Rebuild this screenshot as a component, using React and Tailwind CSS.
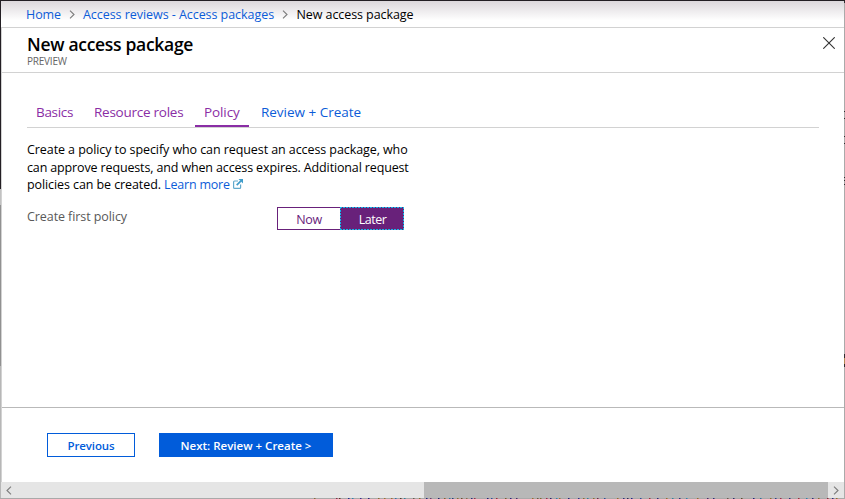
import React from "react";

const marks = [
  [314, "#8a6a3c"], [336, "#8b2a4a"], [339, "#5b2f20"], [348, "#1f2a8c"], [352, "#2d7fae"], [360, "#3a2b8c"],
  [368, "#2a1f7a"], [378, "#8a6a2c"], [384, "#a07030"], [391, "#9a6a30"], [395, "#2d6fae"], [400, "#4a3a2c"],
  [404, "#2d7f9e"], [413, "#6a5a4c"], [419, "#8a6a2c"], [426, "#20207a"], [430, "#6a3a6c"], [438, "#1f1f6a"],
  [444, "#8a5a2c"], [449, "#2d6f9e"], [452, "#1f3a7a"], [457, "#8a6a2c"], [461, "#6a4a2c"], [466, "#8a6a4c"],
  [471, "#2a2a7a"], [474, "#9a2a4a"], [487, "#1f1f7a"], [491, "#2a4a9a"], [496, "#9a2a3a"], [505, "#7a5a2c"],
  [510, "#2a1f7a"], [516, "#4a2a6c"], [532, "#9a6a2c"], [537, "#6a5a3c"], [540, "#7a6a2c"], [546, "#9a2a4a"],
  [550, "#2a1f6a"], [556, "#2d7fae"], [559, "#9a6a2c"], [568, "#1f1f7a"], [578, "#2a2a8a"], [583, "#8a6a2c"],
  [587, "#2d7f9e"], [593, "#8a6a2c"], [597, "#6a2a4c"], [604, "#2a4a9a"], [617, "#9a6a2c"], [623, "#2a2a7a"],
  [627, "#2a2a5a"], [631, "#1f1f8a"], [640, "#2a4a9a"], [649, "#9a2a3a"], [657, "#2a2a7a"], [666, "#9a6a2c"],
  [672, "#2d7f9e"], [679, "#2a2a7a"], [686, "#2d7fae"], [697, "#9a6a2c"], [707, "#4a2a6c"], [713, "#2a2a7a"],
  [727, "#6a5a4c"], [733, "#2a2a6a"], [741, "#5a4a2c"], [753, "#1f1f7a"], [760, "#2d6f9e"], [770, "#8a6a2c"],
  [775, "#2a3a8a"], [780, "#9a2a4a"], [789, "#2a2a7a"], [798, "#9a2a3a"], [806, "#2d7fae"], [812, "#2a2a7a"],
  [818, "#8a6a2c"], [827, "#8a2a3a"], [832, "#2a2a7a"], [836, "#9a6a2c"],
];

function Chevron({ left = false }) {
  return (
    <svg width="6" height="9" viewBox="0 0 6 9" fill="none" stroke="#7b7b7b" strokeWidth="1.1" className="shrink-0">
      <path d={left ? "M5 .7 1 4.5 5 8.3" : "M1 .7 5 4.5 1 8.3"} />
    </svg>
  );
}

function External() {
  return (
    <svg width="10" height="10" viewBox="0 0 10 10" fill="none" stroke="#3f9cca" className="ml-[3px] inline-block align-[0.5px]">
      <path d="M5 2H1.5Q.6 2 .6 2.9v5.6q0 .9.9.9h5.2q.9 0 .9-.9V5.5" stroke="#62a9cc" strokeWidth="1.2" />
      <path d="M3.7 6.2 8 1.9" strokeWidth="1.7" />
      <path d="M5.5 0H10v4.5z" fill="#3f9cca" stroke="none" />
    </svg>
  );
}

export default function App() {
  return (
    <div className="flex h-[499px] w-[845px] flex-col overflow-hidden bg-white font-['Open_Sans','Noto_Sans',sans-serif] text-[12.5px] text-black">
      <div className="h-px shrink-0 bg-[#231f24]" />
      <div className="flex h-[497px] shrink-0">
        <div className="flex w-px shrink-0 flex-col">
          <div className="h-[188px] bg-[#231f24]" />
          <div className="h-4 bg-[#c2c2c2]" />
          <div className="h-[161px] bg-[#919191]" />
          <div className="flex-1 bg-[#b7b7b7]" />
        </div>
        <main className="flex w-[843px] shrink-0 flex-col">
          <nav className="flex h-[27px] shrink-0 items-center border-b border-[#d2d2d2] bg-linear-to-b from-[#dcd8dc] to-white to-75% pt-px pl-[25px] leading-[18px] whitespace-nowrap">
            <a className="w-[43px] pt-px tracking-[-0.08px] text-[#0c5cd8]">Home</a>
            <Chevron />
            <a className="ml-2 w-[199px] pt-px tracking-[-0.05px] text-[#0c5cd8]">Access reviews - Access packages</a>
            <Chevron />
            <span className="ml-[8.5px] pt-px tracking-[-0.08px]">New access package</span>
          </nav>
          <div className="flex min-h-0 flex-1 flex-col border-l border-[#d2d2d2]">
            <header className="flex h-[45px] shrink-0 justify-between border-b border-[#d2d2d2] pr-[9px] pl-[25px]">
              <div className="pt-[5px]">
                <h1 className="h-[23px] text-[17.5px] leading-[23px] font-semibold tracking-[-0.3px] whitespace-nowrap">New access package</h1>
                <p className="text-[10px] leading-[11px] tracking-[-0.22px] text-[#666]">PREVIEW</p>
              </div>
              <svg width="12" height="12" viewBox="0 0 12 12" stroke="#333" strokeWidth="1.1" className="mt-[9px]">
                <path d="m.3.3 11.4 11.4M11.7.3.3 11.7" />
              </svg>
            </header>
            <section className="flex flex-1 flex-col pr-[25px] pl-[25px]">
              <div className="mt-[25px] flex h-[30px] border-b border-[#d2d2d2] text-[13.5px] whitespace-nowrap text-[#8a2da5]">
                <span className="ml-[9px] w-[58px] leading-[29px] tracking-[-0.3px]">Basics</span>
                <span className="w-[101px] leading-[29px] tracking-[-0.25px]">Resource roles</span>
                <span className="h-[29px] w-[54px] border-b-2 border-[#8a2da5] pl-[9px] leading-[29px] tracking-[-0.1px]">Policy</span>
                <span className="ml-3 leading-[29px] tracking-[-0.02px] text-[#0c5cd8]">Review + Create</span>
              </div>
              <div className="mt-[13px] text-[12.5px] leading-[17.67px] whitespace-nowrap">
                <p className="tracking-[-0.08px]">Create a policy to specify who can request an access package, who</p>
                <p className="tracking-[-0.14px]">can approve requests, and when access expires. Additional request</p>
                <p className="tracking-[-0.09px]">policies can be created. <a className="tracking-[-0.2px] text-[#0c5cd8]">Learn more</a><External /></p>
              </div>
              <div className="mt-[13px] flex">
                <label className="w-[250px] leading-[20px] tracking-[-0.08px] text-[#595959]">Create first policy</label>
                <div className="flex h-[23px] text-center leading-[22px]">
                  <button className="w-[63px] border border-r-0 border-[#68217a] pt-px tracking-[-0.3px] text-[#68217a]">Now</button>
                  <button className="relative w-16 bg-[#68217a] pt-[2px] pl-px tracking-[-0.5px] text-white">
                    Later
                    <svg width="64" height="23" className="absolute inset-0" fill="none" stroke="#16b5e8" strokeDasharray="2 1">
                      <path d="M0 .5h64M0 22.5h64M.5 0v23M63.5 0v23" />
                    </svg>
                  </button>
                </div>
              </div>
            </section>
            <footer className="flex h-[75px] shrink-0 items-start gap-6 border-t border-[#b9b9b9] pt-[25px] pl-[45px] text-[11.5px] font-semibold">
              <button className="h-6 w-[88px] border border-[#015cda] pt-px tracking-[-0.12px] text-[#015cda]">Previous</button>
              <button className="h-6 w-[174px] bg-[#015cda] pt-px text-white">Next: Review + Create &gt;</button>
            </footer>
          </div>
          <div className="flex h-4 shrink-0 bg-[#e5e5e5]">
            <div className="flex w-[423px] items-center pl-[5px]"><Chevron left /></div>
            <div className="w-[404px] bg-[#b8b8b8]" />
            <div className="flex flex-1 items-center justify-center"><Chevron /></div>
          </div>
        </main>
        <svg width="1" height="497" className="shrink-0">
          <path d="M0 0h1v497H0z" fill="#aaa" />
          <path d="M0 0h1v2H0zM0 110h1v1H0zM0 117h1v1H0zM0 135h1v1H0zM0 142h1v1H0zM0 176h1v1H0zM0 179h1v1H0zM0 183h1v1H0zM0 353h1v13H0z" fill="#302c30" />
          <path d="M0 357h1v6H0z" fill="#b58a55" />
        </svg>
      </div>
      <svg width="845" height="1" className="shrink-0">
        <path d="M0 0h845v1H0z" fill="#a9a9a9" />
        {marks.map(([x, color]) => <rect key={x} x={x} width="1.5" height="1" fill={color} />)}
      </svg>
    </div>
  );
}
